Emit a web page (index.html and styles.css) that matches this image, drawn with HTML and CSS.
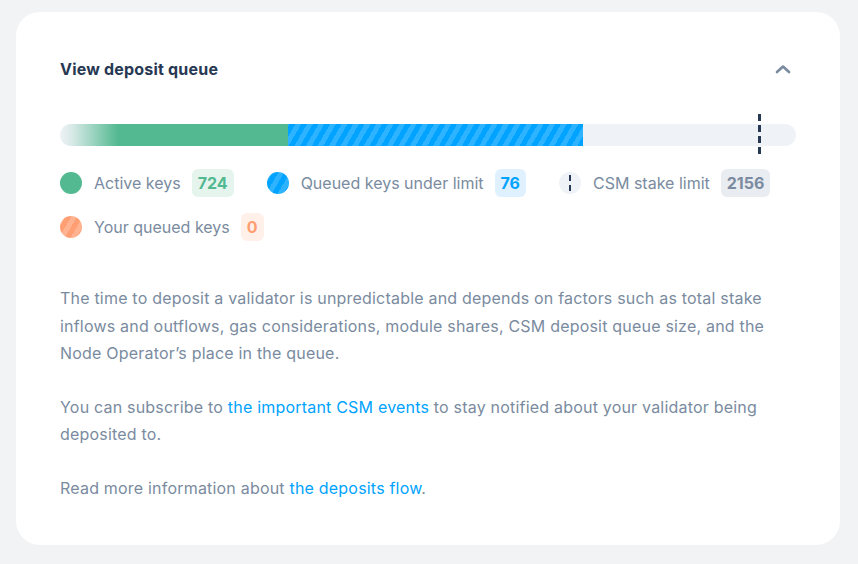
FILE: index.html
```html
<!DOCTYPE html>
<html>
<head>
<meta charset="utf-8">
<link rel="stylesheet" href="styles.css">
</head>
<body>
<div class="card">
  <div class="header">
    <div class="title">View deposit queue</div>
    <svg class="chevron" width="16" height="10" viewBox="0 0 16 10"><path d="M2 8 L8 2.5 L14 8" fill="none" stroke="#7a8ba0" stroke-width="2.6" stroke-linecap="round" stroke-linejoin="round"/></svg>
  </div>
  <div class="bar-wrap">
    <div class="bar">
      <div class="seg-active" style="width:228px"></div>
      <div class="seg-queued" style="width:295px"></div>
    </div>
    <div class="limit" style="left:698px"></div>
  </div>
  <div class="legend">
    <div class="item"><span class="dot dot-green"></span><span class="label">Active keys</span><span class="badge b-green">724</span></div>
    <div class="item"><span class="dot dot-blue"></span><span class="label">Queued keys under limit</span><span class="badge b-blue">76</span></div>
    <div class="item"><span class="dot dot-limit"><span class="dash"></span></span><span class="label">CSM stake limit</span><span class="badge b-gray">2156</span></div>
    <div class="item"><span class="dot dot-orange"></span><span class="label">Your queued keys</span><span class="badge b-orange">0</span></div>
  </div>
  <div class="text">
    <p>The time to deposit a validator is unpredictable and depends on factors such as total stake inflows and outflows, gas considerations, module shares, CSM deposit queue size, and the Node Operator’s place in the queue.</p>
    <p>You can subscribe to <a href="#">the important CSM events</a> to stay notified about your validator being deposited to.</p>
    <p>Read more information about <a href="#">the deposits flow</a>.</p>
  </div>
</div>
</body>
</html>
```
FILE: styles.css
```css
* { box-sizing: border-box; }
html, body { margin: 0; padding: 0; }
body {
  background: #f2f3f5;
  font-family: Inter, "Open Sans", sans-serif;
  width: 858px;
  height: 564px;
  overflow: hidden;
}
.card {
  margin: 12px 18px 0 16px;
  width: 824px;
  height: 533px;
  background: #fff;
  border-radius: 24px;
  padding: 46px 44px 0 44px;
}
.header {
  display: flex;
  align-items: center;
  justify-content: space-between;
  height: 21px;
  padding-right: 5px;
}
.title {
  font-size: 16px;
  font-weight: 700;
  color: #273852;
  letter-spacing: 0.2px;
}
.chevron { display: block; }
.bar-wrap {
  position: relative;
  margin-top: 45px;
  height: 22px;
}
.bar {
  display: flex;
  height: 22px;
  border-radius: 11px;
  overflow: hidden;
  background: #eff2f6;
}
.seg-active {
  background: linear-gradient(90deg, rgba(83,185,145,0) 0px, rgba(83,185,145,0.15) 12px, #53b991 58px);
}
.seg-queued {
  background-color: #00a3ff;
  background-image: repeating-linear-gradient(-60deg, #00a3ff 0 5px, #2db3ff 5px 10px);
}
.limit {
  position: absolute;
  top: -10px;
  bottom: -10px;
  width: 3px;
  background: repeating-linear-gradient(180deg, #273852 0 7px, transparent 7px 11px);
}
.legend {
  display: flex;
  flex-wrap: wrap;
  column-gap: 33px;
  row-gap: 16px;
  margin-top: 23px;
}
.item {
  display: flex;
  align-items: center;
  height: 28px;
}
.dot {
  width: 22px;
  height: 22px;
  border-radius: 50%;
  margin-right: 12px;
  flex: none;
  position: relative;
}
.dot-green { background: #53b991; }
.dot-blue {
  background-color: #00a3ff;
  background-image: repeating-linear-gradient(-60deg, #00a3ff 0 5px, #2db3ff 5px 10px);
}
.dot-orange {
  background-color: #ff9f73;
  background-image: repeating-linear-gradient(-60deg, #ff9f73 0 5px, #ffb390 5px 10px);
}
.dot-limit { background: #eff2f6; }
.dot-limit .dash {
  position: absolute;
  left: 10px;
  top: 3px;
  width: 2px;
  height: 16px;
  background: repeating-linear-gradient(180deg, #273852 0 6px, transparent 6px 10px);
}
.label {
  font-size: 16px;
  color: #7a8ba0;
  margin-right: 11px;
}
.badge {
  height: 28px;
  line-height: 28px;
  padding: 0 6px;
  border-radius: 6px;
  font-size: 16px;
  font-weight: 700;
}
.b-green { background: #e5f5ee; color: #53b991; }
.b-blue { background: #dff1fe; color: #00a3ff; }
.b-gray { background: #e9ecf1; color: #7a8ba0; }
.b-orange { background: #fff0ea; color: #ff9f73; }
.text {
  margin-top: 44px;
  font-size: 16px;
  line-height: 27.5px;
  color: #7a8ba0;
  letter-spacing: 0.2px;
}
.text p { margin: 0 0 26px 0; }
.text a { color: #00a3ff; text-decoration: none; }
```
